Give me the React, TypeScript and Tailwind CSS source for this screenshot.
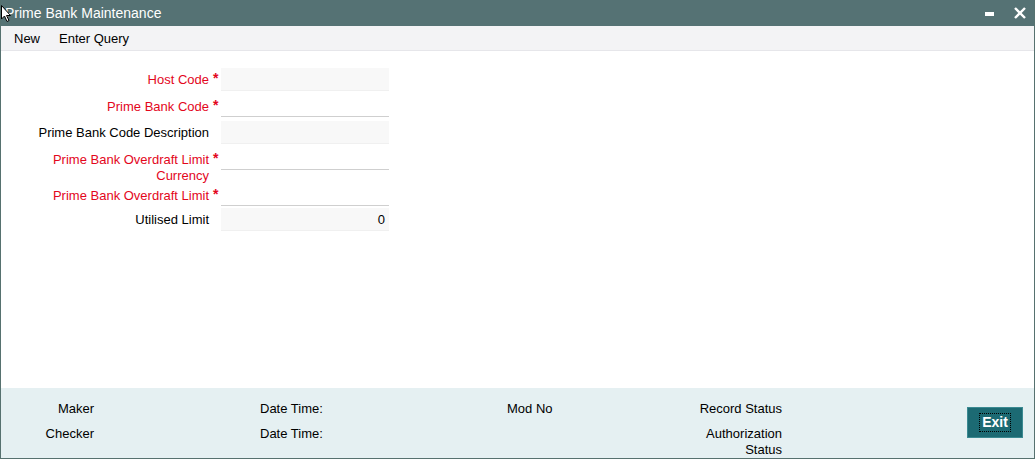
import React from 'react';

type Field = {
  label: string;
  required?: boolean;
  readOnly?: boolean;
  value?: string;
  rowClass: string;
};

const fields: Field[] = [
  { label: 'Host Code', required: true, readOnly: true, rowClass: 'mt-[17px]' },
  { label: 'Prime Bank Code', required: true, rowClass: 'mt-[4px]' },
  { label: 'Prime Bank Code Description', readOnly: true, rowClass: 'mt-[4px]' },
  { label: 'Prime Bank Overdraft Limit Currency', required: true, rowClass: 'mt-[4px]' },
  { label: 'Prime Bank Overdraft Limit', required: true, rowClass: 'mt-0' },
  { label: 'Utilised Limit', readOnly: true, value: '0', rowClass: 'mt-[2px]' },
];

function FormRow({ f }: { f: Field }) {
  return (
    <div className={`flex items-start ${f.rowClass}`}>
      {/* label */}
      <div
        className={`w-[175px] ml-[33px] pt-[4px] text-right leading-[16px] ${
          f.required ? 'text-[#e3061c]' : 'text-black'
        }`}
      >
        {f.label}
      </div>
      <div className="w-[12px] pl-[4px] pt-[3px] text-[#e3061c] text-[14px] leading-[14px] font-bold">
        {f.required ? '*' : ''}
      </div>
      {/* input */}
      {f.readOnly ? (
        <div className="w-[168px] h-[23px] bg-[#f8f8f8] border-b border-[#f0f0f0] flex items-center justify-end pr-[4px] pt-[1px] text-black">
          {f.value}
        </div>
      ) : (
        <div className="w-[168px] h-[22px] bg-white border-b border-[#cfcfcf]" />
      )}
    </div>
  );
}

export default function App() {
  return (
    <div
      className="relative w-[1035px] h-[459px] flex flex-col border border-[#56716f] border-t-0 overflow-hidden bg-white text-[13px]"
      style={{ fontFamily: '"Liberation Sans", Arial, sans-serif' }}
    >
      {/* ── 타이틀바 ─────────────────────────────── */}
      <div className="h-[26px] shrink-0 bg-[#557274] flex items-center pl-[5px] pr-[8px] text-white -mx-px">
        <span className="text-[14px] leading-none">Prime Bank Maintenance</span>
        <div className="ml-auto flex items-center gap-[20px]">
          <div className="w-[9px] h-[4px] bg-white mt-[1px]" />
          <svg width="12" height="12" viewBox="0 0 12 12" className="mr-[1px]">
            <path d="M1 1 L11 11 M11 1 L1 11" stroke="white" strokeWidth="2.4" />
          </svg>
        </div>
      </div>

      {/* ── 툴바 ─────────────────────────────────── */}
      <div className="h-[25px] shrink-0 bg-[#f3f3f5] border-b border-[#e6e6ea] flex items-center gap-[19px] pl-[13px] pt-[1px] text-black">
        <span>New</span>
        <span>Enter Query</span>
      </div>

      {/* ── 폼 ──────────────────────────────────── */}
      <div className="flex-1 flex flex-col">
        {fields.map((f) => (
          <FormRow key={f.label} f={f} />
        ))}
      </div>

      {/* ── 하단 ─────────────────────────────────── */}
      <div className="h-[70px] shrink-0 bg-[#e5f0f2] flex text-black leading-[16px]">
        <div className="w-[93px] pt-[13px] flex flex-col gap-[9px] text-right">
          <span>Maker</span>
          <span>Checker</span>
        </div>
        <div className="w-[247px] ml-[166px] pt-[13px] flex flex-col gap-[9px]">
          <span>Date Time:</span>
          <span>Date Time:</span>
        </div>
        <div className="w-[175px] pt-[13px] flex flex-col gap-[9px]">
          <span>Mod No</span>
        </div>
        <div className="w-[100px] pt-[13px] flex flex-col gap-[9px] text-right">
          <span>Record Status</span>
          <span>
            Authorization
            <br />
            Status
          </span>
        </div>
        <div className="ml-auto mr-[11px] pt-[19px]">
          <button className="w-[56px] h-[31px] bg-[#1c6a73] border border-[#3b8a92] text-white font-bold text-[14px] flex items-center justify-center">
            <span className="px-[2px] leading-[17px] outline-1 outline-dotted outline-black">Exit</span>
          </button>
        </div>
      </div>

      {/* 마우스 커서 */}
      <svg className="absolute left-0 top-[5px]" width="10" height="18" viewBox="0 0 10 18">
        <path d="M0.5 0.5 L0.5 14 L3.5 11 L6 16.5 L8 15.5 L5.5 10.5 L9.5 10.5 Z" fill="white" stroke="black" strokeWidth="1" />
      </svg>
    </div>
  );
}
